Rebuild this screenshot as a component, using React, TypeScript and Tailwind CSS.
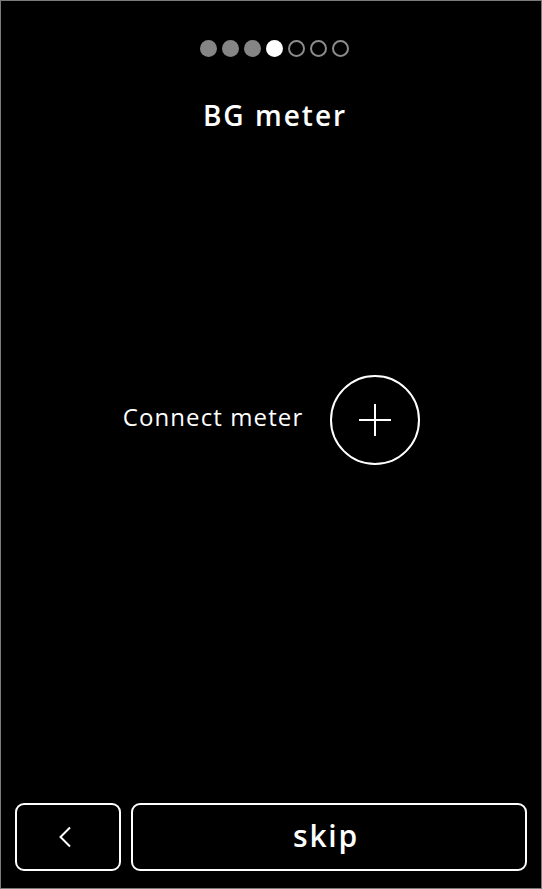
import React from "react";

// Onboarding step: BG meter pairing
const steps = [
  "done",
  "done",
  "done",
  "current",
  "todo",
  "todo",
  "todo",
] as const;

function StepDots() {
  return (
    <div className="flex items-center justify-center gap-[5px] pl-[6px]">
      {steps.map((s, i) => (
        <span
          key={i}
          className={
            s === "done"
              ? "w-[17px] h-[17px] rounded-full bg-[#858585]"
              : s === "current"
              ? "w-[17px] h-[17px] rounded-full bg-white"
              : "w-[17px] h-[17px] rounded-full border-2 border-[#8c8c8c]"
          }
        />
      ))}
    </div>
  );
}

export default function App() {
  return (
    <div
      className="w-[542px] h-[889px] bg-black text-white flex flex-col border border-[#7a7a7a]"
      style={{ fontFamily: '"Open Sans", "Noto Sans", sans-serif' }}
    >
      {/* Header */}
      <div className="pt-[39px]">
        <StepDots />
        <h1 className="mt-[40px] text-center text-[28px] font-semibold leading-[36px] tracking-[2px] pl-[8px]">
          BG meter
        </h1>
      </div>

      {/* Connect row */}
      <div className="flex-1 flex items-start justify-center pt-[242px]">
        <div className="flex items-center gap-[27px] pl-[1px]">
          <span className="text-[24px] leading-[32px] tracking-[1.1px] -mt-[6px]">Connect meter</span>
          <button className="w-[90px] h-[90px] rounded-full border-2 border-white flex items-center justify-center">
            <svg width="34" height="34" viewBox="0 0 34 34" fill="none">
              <path d="M17 1v32M1 17h32" stroke="white" strokeWidth="2" />
            </svg>
          </button>
        </div>
      </div>

      {/* Bottom nav */}
      <div className="flex gap-[10px] px-[14px] pb-[17px]">
        <button className="w-[106px] h-[68px] rounded-[9px] border-2 border-white flex items-center justify-center">
          <svg width="14" height="22" viewBox="0 0 14 22" fill="none" className="-ml-[6px]">
            <path d="M12 1.5 2.5 11l9.5 9.5" stroke="white" strokeWidth="2" />
          </svg>
        </button>
        <button className="flex-1 h-[68px] rounded-[9px] border-2 border-white flex items-center justify-center text-[30px] font-semibold leading-none tracking-[1.8px]">
          <span className="-mt-[3px] -ml-[6px]">skip</span>
        </button>
      </div>
    </div>
  );
}
